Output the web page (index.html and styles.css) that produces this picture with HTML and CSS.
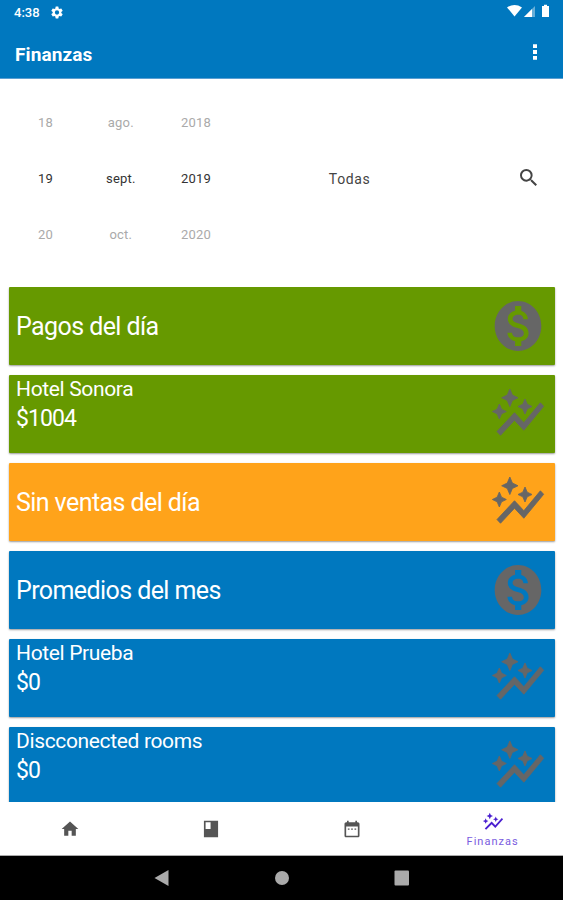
FILE: index.html
```html
<!DOCTYPE html>
<html lang="es">
<head>
    <meta charset="utf-8">
    <title>Finanzas</title>
    <link rel="stylesheet" href="styles.css">
</head>
<body>

    <svg class="symbols">
        <symbol id="graph" viewBox="0 0 24 24" preserveAspectRatio="none"><path d="M14.06 9.94L12 9l2.06-.94L15 6l.94 2.06L18 9l-2.06.94L15 12zM4 14l.94-2.06L7 11l-2.06-.94L4 8l-.94 2.06L1 11l2.06.94zM8.5 9l1.09-2.41L12 5.5 9.59 4.41 8.5 2 7.41 4.41 5 5.5l2.41 1.09zM4.5 20.5l6-6.01 4 4L23 8.93l-1.41-1.41-7.09 7.97-4-4L3 19z"/></symbol>
        <symbol id="money" viewBox="0 0 24 24" preserveAspectRatio="none"><path d="M12 2C6.48 2 2 6.48 2 12s4.48 10 10 10 10-4.48 10-10S17.52 2 12 2zm1.41 16.09V20h-2.67v-1.93c-1.71-.36-3.16-1.46-3.27-3.4h1.96c.1 1.05.82 1.87 2.65 1.87 1.96 0 2.4-.98 2.4-1.59 0-.83-.44-1.61-2.67-2.14-2.48-.6-4.18-1.62-4.18-3.67 0-1.72 1.39-2.84 3.11-3.21V4h2.67v1.95c1.86.45 2.79 1.86 2.85 3.39H14.3c-.05-1.11-.64-1.87-2.22-1.87-1.5 0-2.4.68-2.4 1.64 0 .84.65 1.39 2.67 1.91s4.18 1.39 4.18 3.91c-.01 1.83-1.38 2.83-3.12 3.16z"/></symbol>
    </svg>

    <header>
        <div class="status">
            <span class="time">4:38</span>
            <svg class="gear" viewBox="2 2 20 20"><path d="M19.14 12.94c.04-.3.06-.61.06-.94s-.02-.64-.07-.94l2.03-1.58c.18-.14.23-.41.12-.61l-1.92-3.32c-.12-.22-.37-.29-.59-.22l-2.39.96c-.5-.38-1.03-.7-1.62-.94l-.36-2.54C14.36 2.57 14.16 2 13.92 2h-3.84c-.24 0-.43.57-.47.81l-.36 2.54c-.59.24-1.13.57-1.62.94l-2.39-.96c-.22-.08-.47 0-.59.22L2.74 8.87c-.12.21-.08.47.12.61l2.03 1.58c-.05.3-.09.63-.09.94s.02.64.07.94l-2.03 1.58c-.18.14-.23.41-.12.61l1.92 3.32c.12.22.37.29.59.22l2.39-.96c.5.38 1.03.7 1.62.94l.36 2.54c.05.24.24.81.48.81h3.84c.24 0 .44-.57.47-.81l.36-2.54c.59-.24 1.13-.56 1.62-.94l2.39.96c.22.08.47 0 .59-.22l1.92-3.32c.12-.22.07-.47-.12-.61zM12 15.6A3.6 3.6 0 1 1 12 8.4a3.6 3.6 0 0 1 0 7.2z"/></svg>
            <svg class="signals" viewBox="0 0 44 14"><path d="M0 3.4Q7.5-1.4 15 3.4L7.5 12.500z"/><path d="M17 13L28 2v11z" opacity=".4"/><path d="M17 13l8-8v8z"/><path d="M35 2h2V.8h3V2h2v11h-7z"/></svg>
        </div>
        <div class="toolbar">
            <h1>Finanzas</h1>
            <svg class="more" viewBox="0 0 4 16"><path d="M0 .3h4v3.8H0zM0 6.1h4v3.8H0zM0 11.9h4v3.8H0z"/></svg>
        </div>
    </header>

    <section class="filters">
        <div class="picker"><span>18</span><span class="current">19</span><span>20</span></div>
        <div class="picker"><span>ago.</span><span class="current">sept.</span><span>oct.</span></div>
        <div class="picker"><span>2018</span><span class="current">2019</span><span>2020</span></div>
        <div class="hotel">Todas</div>
        <svg class="search" viewBox="3 3 17.5 17.5"><path d="M15.5 14h-.79l-.28-.27A6.471 6.471 0 0 0 16 9.5 6.5 6.5 0 1 0 9.5 16c1.61 0 3.09-.59 4.23-1.57l.27.28v.79l5 4.99L20.49 19zm-6 0C7.01 14 5 11.99 5 9.5S7.01 5 9.5 5 14 7.01 14 9.5 11.99 14 9.5 14z"/></svg>
    </section>

    <main>
        <div class="card green">
            <h2>Pagos del día</h2>
            <svg><use href="#money"/></svg>
        </div>
        <div class="card green">
            <div class="info"><p class="name">Hotel Sonora</p><p class="amount">$1004</p></div>
            <svg class="trend"><use href="#graph"/></svg>
        </div>
        <div class="card orange">
            <h2>Sin ventas del día</h2>
            <svg class="trend"><use href="#graph"/></svg>
        </div>
        <div class="card blue">
            <h2>Promedios del mes</h2>
            <svg><use href="#money"/></svg>
        </div>
        <div class="card blue">
            <div class="info"><p class="name">Hotel Prueba</p><p class="amount">$0</p></div>
            <svg class="trend"><use href="#graph"/></svg>
        </div>
        <div class="card blue">
            <div class="info"><p class="name">Discconected rooms</p><p class="amount">$0</p></div>
            <svg class="trend"><use href="#graph"/></svg>
        </div>
    </main>

    <nav class="tabs">
        <a><svg viewBox="0 0 24 24"><path d="M10 20v-6h4v6h5v-8h3L12 3 2 12h3v8z"/></svg></a>
        <a><svg viewBox="0 0 24 24"><path d="M3.500 2h17v20h-17zM5.500 4v8h6V4z" fill-rule="evenodd"/></svg></a>
        <a><svg viewBox="0 0 24 24"><path d="M19 4h-1V2h-2v2H8V2H6v2H5c-1.1 0-2 .9-2 2v14c0 1.1.9 2 2 2h14c1.1 0 2-.9 2-2V6c0-1.1-.9-2-2-2zm0 16H5V9h14zM7 11.500h2v1.500H7zM11 11.500h2v1.500h-2zM15 11.500h2v1.500h-2z"/></svg></a>
        <a class="active"><svg><use href="#graph"/></svg><span>Finanzas</span></a>
    </nav>

    <footer>
        <svg viewBox="0 0 16 16"><path d="M14.500 0v16L.5 8z"/></svg>
        <svg viewBox="0 0 16 16"><circle cx="8" cy="8" r="7"/></svg>
        <svg viewBox="0 0 16 16"><rect x=".5" y=".5" width="14.500" height="15" rx="1"/></svg>
    </footer>

</body>
</html>
```
FILE: styles.css
```css
* { box-sizing: border-box; margin: 0; }
body { width: 563px; height: 900px; overflow: hidden; display: flex; flex-direction: column; font-family: Roboto, sans-serif; background: #fff; }
svg { fill: currentColor; flex: none; }
.symbols { display: none; }

header { height: 79px; background: #0078bf; color: #fff; border-bottom: 1px solid #5b9fd2; }
.status { height: 24px; display: flex; align-items: center; padding: 0 12px 0 14px; }
.time { width: 37px; font-size: 13px; font-weight: 500; }
.gear { width: 12px; height: 13px; }
.signals { width: 44px; height: 14px; margin-left: auto; margin-bottom: 2px; }
.toolbar { height: 54px; display: flex; align-items: center; justify-content: space-between; padding: 6px 26px 0 15px; }
h1 { font-size: 19px; font-weight: 700; letter-spacing: 0.1px; }
.more { width: 4px; height: 16px; margin-bottom: 4px; }

.filters { height: 208px; display: flex; padding: 16px 26px 0 8px; color: #444; }
.picker { width: 75.2px; display: flex; flex-direction: column; text-align: center; font-size: 13px; line-height: 56px; color: #aaa; letter-spacing: 0.2px; }
.picker .current { color: #333; }
.hotel { width: 232px; text-align: center; font-size: 14px; line-height: 168px; letter-spacing: 0.6px; }
.search { width: 17px; height: 17px; margin: 74px 0 0 auto; }

main { height: 515px; overflow: hidden; padding: 0 8px 0 9px; }
.card { height: 78px; margin-bottom: 10px; padding: 0 9px 0 7px; display: flex; align-items: center; justify-content: space-between; color: #fff; border-radius: 1px; box-shadow: 0 1px 2px rgba(0, 0, 0, 0.4); }
.card svg { width: 56px; height: 60px; color: #666; }
.card .trend { stroke: currentColor; stroke-width: 0.35px; }
.green { background: #669900; }
.orange { background: #ffa31a; }
.blue { background: #0078bf; }
h2 { font-size: 25px; font-weight: 400; letter-spacing: -0.58px; }
.info { align-self: flex-start; }
.name { font-size: 21px; line-height: 29px; letter-spacing: -0.35px; }
.amount { font-size: 23px; line-height: 29px; letter-spacing: -0.9px; }

.tabs { height: 54px; display: flex; border-bottom: 1px solid #aaa; color: #555; }
.tabs a { flex: 1; display: flex; flex-direction: column; align-items: center; justify-content: center; }
.tabs svg { width: 20px; height: 22px; }
.tabs .active { color: #4a1fd0; padding-top: 4px; }
.tabs .active svg { width: 22px; }
.tabs span { font-size: 11px; line-height: 18px; letter-spacing: 1px; color: #7a5ce0; }

footer { height: 44px; background: #000; color: #aaa; display: flex; align-items: center; justify-content: center; gap: 104px; }
footer svg { width: 16px; height: 16px; }
```
